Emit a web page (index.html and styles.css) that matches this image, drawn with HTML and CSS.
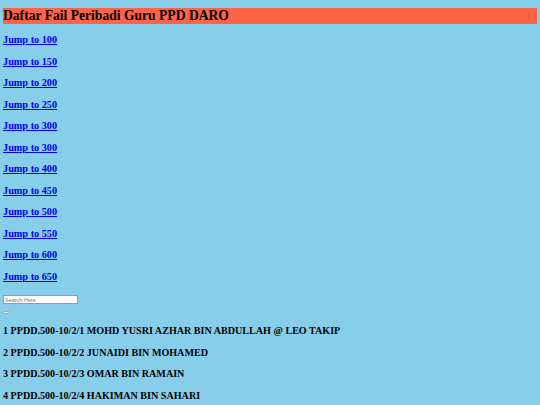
FILE: index.html
```html
<!DOCTYPE html>
<html>
<head>
<meta charset="utf-8">
<link rel="stylesheet" href="styles.css">
</head>
<body>
<h1 class="title">Daftar Fail Peribadi Guru PPD DARO</h1>
<div class="jumps">
<p><a href="#r100">Jump to 100</a></p>
<p><a href="#r150">Jump to 150</a></p>
<p><a href="#r200">Jump to 200</a></p>
<p><a href="#r250">Jump to 250</a></p>
<p><a href="#r300">Jump to 300</a></p>
<p><a href="#r300b">Jump to 300</a></p>
<p><a href="#r400">Jump to 400</a></p>
<p><a href="#r450">Jump to 450</a></p>
<p><a href="#r500">Jump to 500</a></p>
<p><a href="#r550">Jump to 550</a></p>
<p><a href="#r600">Jump to 600</a></p>
<p><a href="#r650">Jump to 650</a></p>
</div>
<div class="search">
<input class="search-input" type="text" placeholder="Search Here">
<button class="search-btn" type="button"></button>
</div>
<div class="list">
<p>1 PPDD.500-10/2/1 MOHD YUSRI AZHAR BIN ABDULLAH @ LEO TAKIP</p>
<p>2 PPDD.500-10/2/2 JUNAIDI BIN MOHAMED</p>
<p>3 PPDD.500-10/2/3 OMAR BIN RAMAIN</p>
<p>4 PPDD.500-10/2/4 HAKIMAN BIN SAHARI</p>
</div>
</body>
</html>
```
FILE: styles.css
```css
html, body {
  margin: 0;
  padding: 0;
}
body {
  background: #87CEEB;
  font-family: "Liberation Serif", "Times New Roman", serif;
  padding: 0 3px;
  overflow: hidden;
  height: 405px;
}
.title {
  margin: 8px 0 10px;
  background: #FF6347;
  font-size: 13.6px;
  line-height: 16px;
  font-weight: bold;
  color: #000;
  padding: 0;
}
.jumps p {
  margin: 10.25px 0;
  font-size: 10.25px;
  line-height: 11.25px;
  font-weight: bold;
}
.jumps a {
  color: #0000EE;
  text-decoration: underline;
}
.search {
  display: flex;
  flex-direction: column;
  align-items: flex-start;
  margin-top: 13px;
}
.search-input {
  width: 75px;
  height: 9px;
  box-sizing: border-box;
  border: 1px solid #999;
  background: #fff;
  padding: 0 1px;
  margin: 0;
  font-family: "Liberation Sans", Arial, sans-serif;
  font-size: 5.5px;
  line-height: 7px;
}
.search-input::placeholder {
  color: #777;
}
.search-btn {
  margin-top: 6.5px;
  width: 7px;
  height: 3.5px;
  padding: 0;
  border: 1px solid #aaa;
  border-radius: 1px;
  background: #e9e9ed;
}
.list p {
  margin: 11px 0 10.25px;
  font-size: 10.1px;
  line-height: 11.25px;
  font-weight: bold;
  color: #000;
}
.list p + p {
  margin-top: 10.25px;
}
```
